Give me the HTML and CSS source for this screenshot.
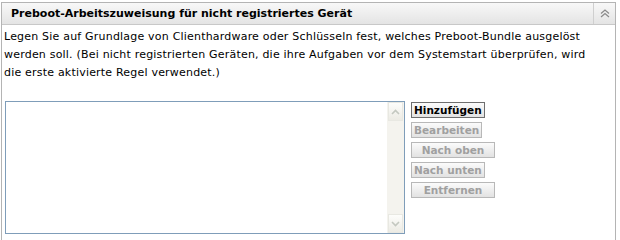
FILE: index.html
```html
<!DOCTYPE html>
<html lang="de">

<head>
    <meta charset="UTF-8">
    <title>Preboot-Arbeitszuweisung</title>
    <link rel="stylesheet" href="styles.css">
</head>

<body>

    <!--* Panel -->
    <div class="panel">
        <div class="panel-header">
            <span class="panel-title">Preboot-Arbeitszuweisung für nicht registriertes Gerät</span>
            <div class="toggle">
                <svg width="10" height="9" viewBox="0 0 10 9">
                    <path d="M1 4.5 L5 1 L9 4.5 M1 8 L5 4.5 L9 8" fill="none" stroke="#8a8a8a" stroke-width="1.2" />
                </svg>
            </div>
        </div>

        <div class="description">
            Legen Sie auf Grundlage von Clienthardware oder Schlüsseln fest, welches Preboot-Bundle ausgelöst
            werden soll. (Bei nicht registrierten Geräten, die ihre Aufgaben vor dem Systemstart überprüfen, wird
            die erste aktivierte Regel verwendet.)
        </div>

        <div class="rules">
            <div class="listbox">
                <div class="list-items"></div>
                <div class="scrollbar">
                    <div class="scroll-btn">
                        <svg width="9" height="6" viewBox="0 0 9 6">
                            <path d="M1 5 L4.5 1.5 L8 5" fill="none" stroke="#c4c8c0" stroke-width="1.6" />
                        </svg>
                    </div>
                    <div class="scroll-track"></div>
                    <div class="scroll-btn">
                        <svg width="9" height="6" viewBox="0 0 9 6">
                            <path d="M1 1 L4.5 4.5 L8 1" fill="none" stroke="#c4c8c0" stroke-width="1.6" />
                        </svg>
                    </div>
                </div>
            </div>

            <div class="actions">
                <button class="action-btn">Hinzufügen</button>
                <button class="action-btn" disabled>Bearbeiten</button>
                <button class="action-btn wide" disabled>Nach oben</button>
                <button class="action-btn" disabled>Nach unten</button>
                <button class="action-btn wide" disabled>Entfernen</button>
            </div>
        </div>
    </div>

</body>

</html>
```

FILE: styles.css
```css
body {
    margin: 0;
    padding: 2px 4px 0 1px;
    font-family: "DejaVu Sans", Verdana, sans-serif;
    font-size: 11px;
    color: #000;
    background-color: #fff;
}

.panel {
    border: 1px solid #b4b4b4;
    border-bottom: none;
    height: 240px;
}

.panel-header {
    display: flex;
    align-items: center;
    height: 21px;
    background: linear-gradient(#f8f8f8, #e4e4e4);
    border-bottom: 1px solid #c8c8c8;
}

.panel-title {
    flex: 1;
    padding-left: 9px;
    font-weight: bold;
    font-size: 11px;
    letter-spacing: 0;
    color: #000;
}

.toggle {
    width: 21px;
    height: 21px;
    border-left: 1px solid #cfcfcf;
    display: flex;
    align-items: center;
    justify-content: center;
}

.description {
    padding: 3px 24px 0 2px;
    line-height: 18px;
    letter-spacing: 0.2px;
}

.rules {
    display: flex;
    align-items: flex-start;
    gap: 6px;
    margin-top: 19px;
    padding-left: 3px;
}

.listbox {
    display: flex;
    width: 398px;
    height: 131px;
    border: 1px solid #7f9db9;
    background-color: #fff;
}

.list-items {
    flex: 1;
}

.scrollbar {
    display: flex;
    flex-direction: column;
    width: 17px;
    background-color: #f4f3ee;
}

.scroll-btn {
    height: 17px;
    margin: 0 1px;
    border: 1px solid #e8e8e2;
    background: linear-gradient(#fdfdfb, #ecebe4);
    display: flex;
    align-items: center;
    justify-content: center;
}

.scroll-track {
    flex: 1;
}

.actions {
    display: flex;
    flex-direction: column;
    align-items: flex-start;
    gap: 4px;
    padding-top: 1px;
}

.action-btn {
    height: 16px;
    padding: 0 2px;
    font-family: "DejaVu Sans", Verdana, sans-serif;
    font-size: 10.5px;
    font-weight: bold;
    line-height: 14px;
    color: #000;
    background: linear-gradient(#fbfbfb, #e2e2e2);
    border: 1px solid #6e6e6e;
    cursor: pointer;
}

.action-btn:disabled {
    color: #a0a0a0;
    border-color: #b8b8b8;
    cursor: default;
}

.wide {
    width: 84px;
}
```
